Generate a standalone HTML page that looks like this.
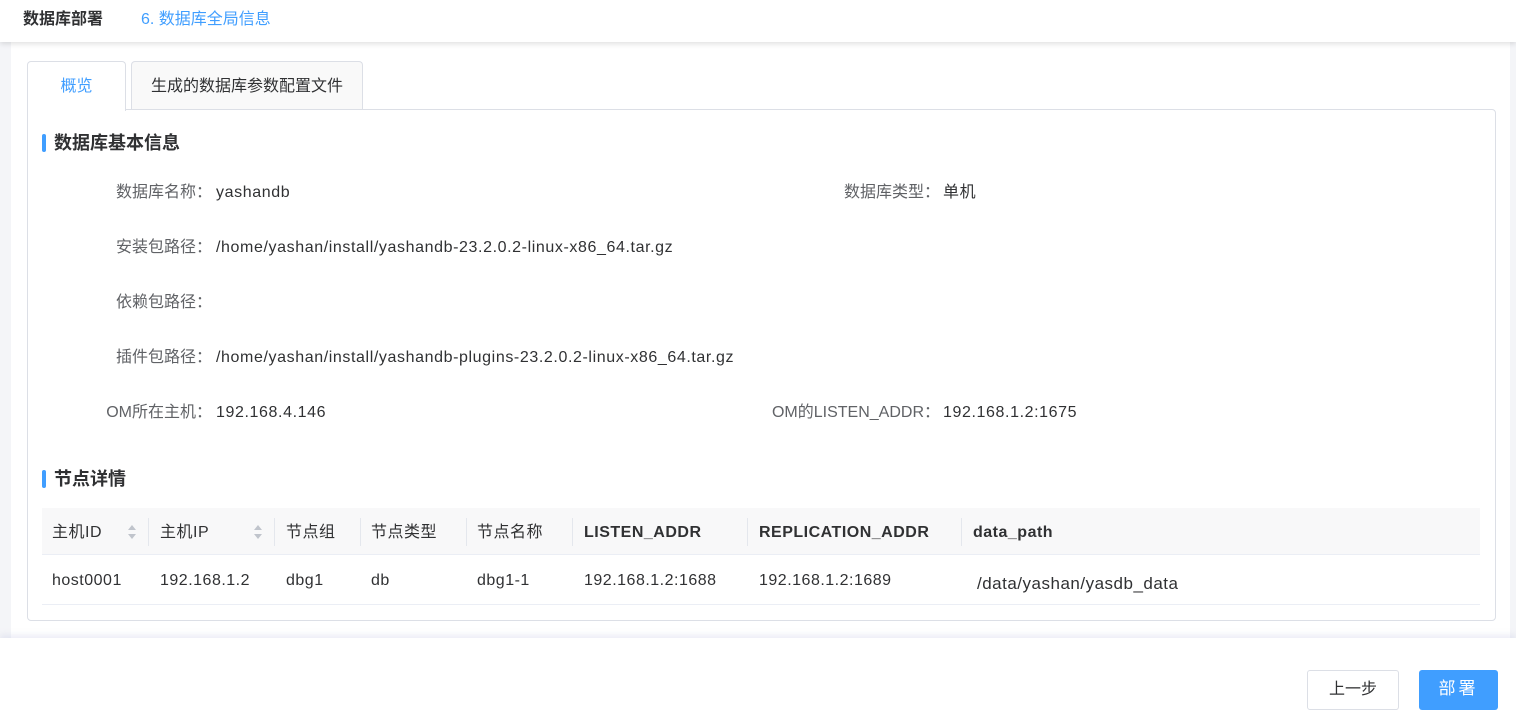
<!DOCTYPE html>
<html><head><meta charset="utf-8"><style>
*{margin:0;padding:0;box-sizing:border-box}
body{width:1516px;height:725px;overflow:hidden;background:#fff;font-family:"Liberation Sans","Noto Sans CJK SC",sans-serif;color:#303133;position:relative;line-height:22px}
.hdr{position:absolute;left:0;top:0;width:1516px;height:42px;background:#fff;box-shadow:0 2px 5px rgba(0,0,0,.12);z-index:2}
.hdr .t{position:absolute;left:23px;top:9px;font-size:16px;font-weight:bold;color:#303133}
.hdr .s{position:absolute;left:141px;top:9px;font-size:16px;color:#409eff}
.gray{position:absolute;left:0;top:42px;width:1516px;height:596px;background:#f4f5f8}
.panel{position:absolute;left:11px;top:42px;width:1499px;height:596px;background:#fff}
.foot{position:absolute;left:0;top:638px;width:1516px;height:87px;background:#fff;box-shadow:0 -3px 6px rgba(180,185,220,.25)}
.tab{position:absolute;top:61px;height:49px;border:1px solid #dcdfe6;border-bottom:none;border-radius:4px 4px 0 0;font-size:16px;text-align:center;line-height:48px}
.box{position:absolute;left:27px;top:109px;width:1469px;height:512px;border:1px solid #dcdfe6;border-radius:0 4px 4px 4px;background:#fff}
.sec{position:absolute;left:42px;font-size:18px;font-weight:bold;color:#303133;line-height:26px}
.sec:before{content:"";position:absolute;left:0;top:4px;width:4px;height:18px;background:#409eff;border-radius:2px}
.sec span{margin-left:12px}
.lbl{position:absolute;font-size:16px;color:#606266;text-align:right;white-space:nowrap}
.val{position:absolute;font-size:16px;color:#303133;letter-spacing:0.6px;white-space:nowrap}
.th{position:absolute;top:508px;height:47px;background:#f8f8f9;left:42px;width:1438px;border-bottom:1px solid #ebeef5}
.c{position:absolute;font-size:16px;color:#303133;letter-spacing:0.5px;white-space:nowrap}
.sep{position:absolute;top:518px;width:1px;height:28px;background:#e4e7ed}
.btn{position:absolute;top:670px;height:40px;border-radius:3px;font-size:16px;text-align:center;line-height:38px}
</style></head><body>
<div class="gray"></div>
<div class="panel"></div>
<div class="hdr"><span class="t">数据库部署</span><span class="s">6. 数据库全局信息</span></div>
<div class="tab" style="left:27px;width:99px;color:#409eff;background:#fff;z-index:3;height:50px;line-height:50px">概览</div>
<div class="tab" style="left:131px;width:232px;background:#f9f9f9;line-height:50px">生成的数据库参数配置文件</div>
<div class="box"></div>
<div class="sec" style="top:130px"><span>数据库基本信息</span></div>
<div class="lbl" style="left:60px;width:152px;top:182px">数据库名称：</div><div class="val" style="left:216px;top:182px">yashandb</div>
<div class="lbl" style="left:780px;width:160px;top:182px">数据库类型：</div><div class="val" style="left:943px;top:182px">单机</div>
<div class="lbl" style="left:60px;width:152px;top:237px">安装包路径：</div><div class="val" style="left:216px;top:237px">/home/yashan/install/yashandb-23.2.0.2-linux-x86_64.tar.gz</div>
<div class="lbl" style="left:60px;width:152px;top:292px">依赖包路径：</div>
<div class="lbl" style="left:60px;width:152px;top:347px">插件包路径：</div><div class="val" style="left:216px;top:347px">/home/yashan/install/yashandb-plugins-23.2.0.2-linux-x86_64.tar.gz</div>
<div class="lbl" style="left:60px;width:152px;top:402px">OM所在主机：</div><div class="val" style="left:216px;top:402px">192.168.4.146</div>
<div class="lbl" style="left:700px;width:240px;top:402px">OM的LISTEN_ADDR：</div><div class="val" style="left:943px;top:402px">192.168.1.2:1675</div>
<div class="sec" style="top:466px"><span>节点详情</span></div>
<div class="th"></div>
<div class="c" style="left:52px;top:522px">主机ID</div>
<div class="c" style="left:160px;top:522px">主机IP</div>
<div class="c" style="left:286px;top:522px">节点组</div>
<div class="c" style="left:371px;top:522px">节点类型</div>
<div class="c" style="left:477px;top:522px">节点名称</div>
<div class="c" style="left:584px;top:522px;font-weight:bold">LISTEN_ADDR</div>
<div class="c" style="left:759px;top:522px;font-weight:bold">REPLICATION_ADDR</div>
<div class="c" style="left:973px;top:522px;font-weight:bold">data_path</div>
<div class="sep" style="left:148px"></div><div class="sep" style="left:274px"></div><div class="sep" style="left:360px"></div><div class="sep" style="left:466px"></div><div class="sep" style="left:572px"></div><div class="sep" style="left:747px"></div><div class="sep" style="left:961px"></div>
<svg style="position:absolute;left:126px;top:523px" width="12" height="18"><path d="M6 2L10 7H2Z" fill="#c0c4cc"/><path d="M6 16L10 11H2Z" fill="#c0c4cc"/></svg>
<svg style="position:absolute;left:252px;top:523px" width="12" height="18"><path d="M6 2L10 7H2Z" fill="#c0c4cc"/><path d="M6 16L10 11H2Z" fill="#c0c4cc"/></svg>
<div class="c" style="left:52px;top:570px">host0001</div>
<div class="c" style="left:160px;top:570px">192.168.1.2</div>
<div class="c" style="left:286px;top:570px">dbg1</div>
<div class="c" style="left:371px;top:570px">db</div>
<div class="c" style="left:477px;top:570px">dbg1-1</div>
<div class="c" style="left:584px;top:570px">192.168.1.2:1688</div>
<div class="c" style="left:759px;top:570px">192.168.1.2:1689</div>
<div class="c" style="left:977px;top:573px;font-size:17px">/data/yashan/yasdb_data</div>
<div style="position:absolute;left:42px;top:604px;width:1438px;height:1px;background:#ebeef5"></div>
<div class="foot"></div>
<div class="btn" style="left:1307px;width:92px;border:1px solid #dcdfe6;background:#fff;color:#303133">上一步</div>
<div class="btn" style="left:1419px;width:79px;background:#409eff;color:#fff;font-size:17px;letter-spacing:3px">部署</div>
</body></html>
